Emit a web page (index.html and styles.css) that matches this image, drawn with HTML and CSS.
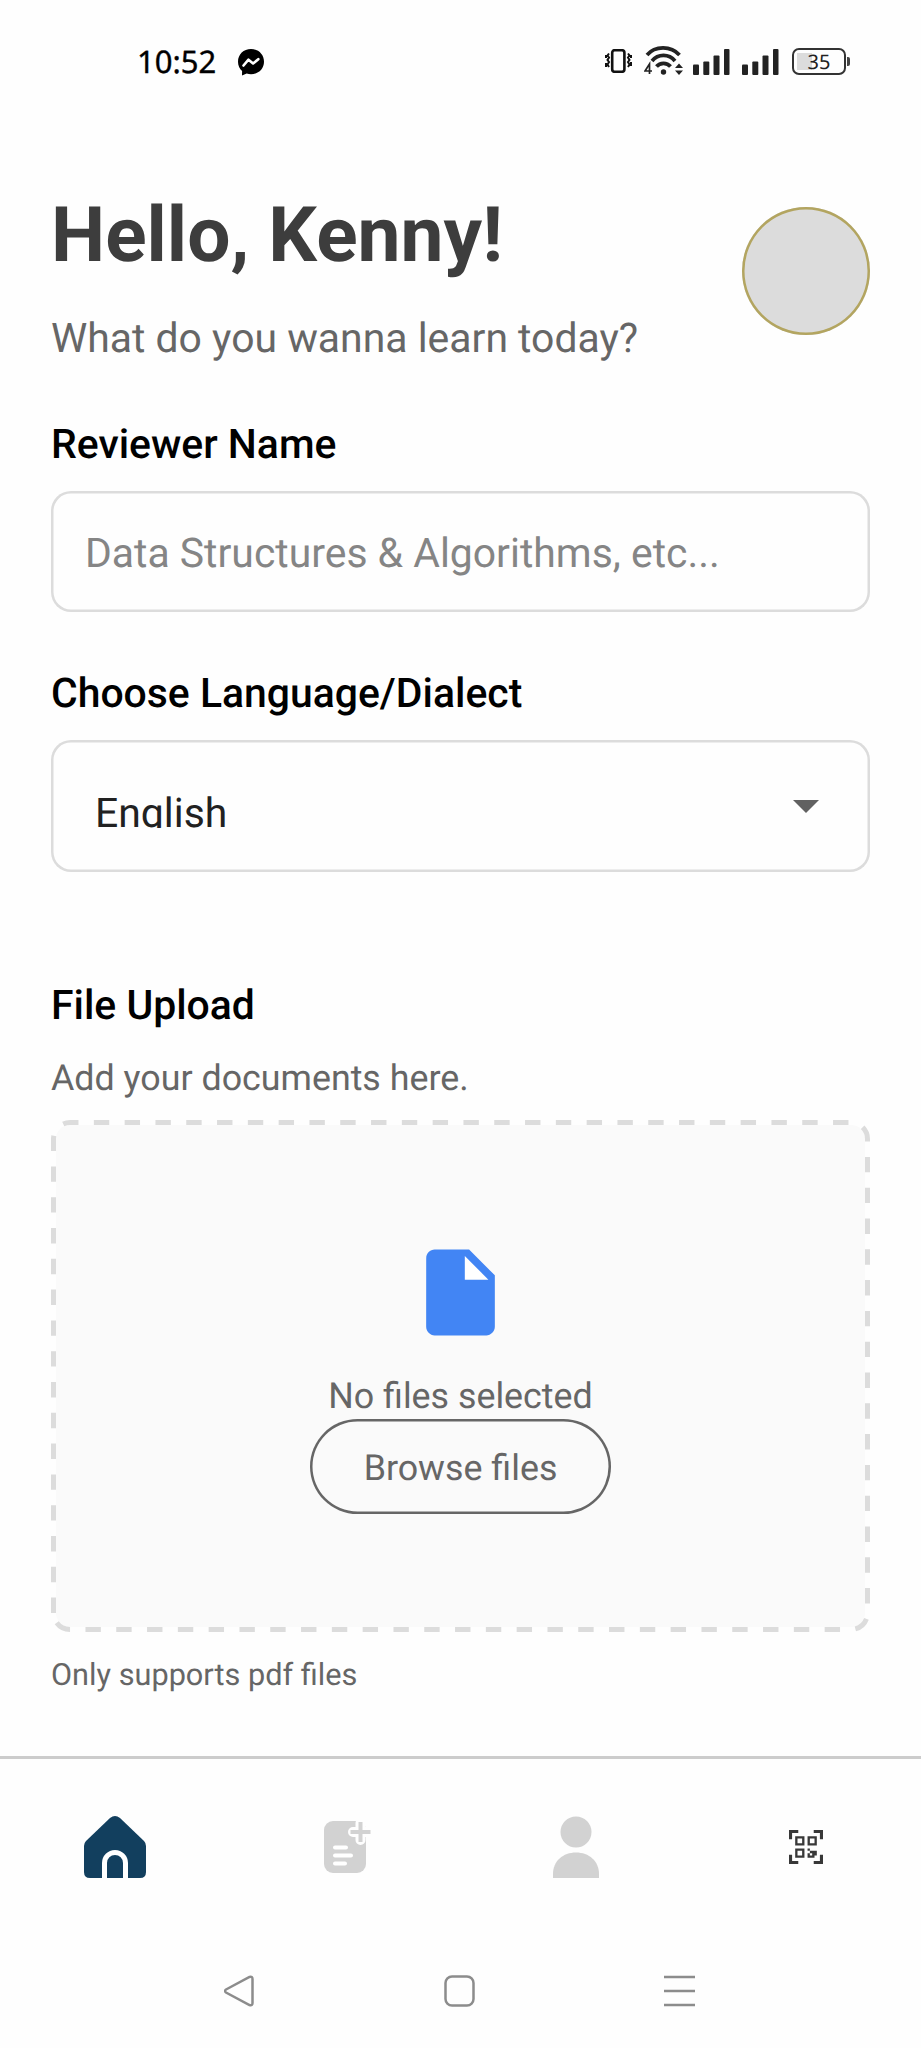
FILE: index.html
```html
<!DOCTYPE html>
<html lang="en">
<head>
<meta charset="utf-8">
<title>Home</title>
<link rel="stylesheet" href="styles.css">
</head>
<body>
<header class="status">
  <span class="time">10:52</span>
  <svg class="messenger" width="26" height="28" viewBox="0 0 26 28"><path d="M13 0C5.600 0 0 5.400 0 12.700c0 3.800 1.600 7.100 4.100 9.400L4 26.600l4.700-2.100c1.400.5 2.800.7 4.300.7 7.400 0 13-5.400 13-12.500S20.400 0 13 0z"/><path d="M5.500 16.500l5-5.800 4.600 3.800 5.200-4.300" fill="none" stroke="#fff" stroke-width="2.600" stroke-linejoin="round" stroke-linecap="round"/></svg>
  <div class="signals">
    <svg class="vibrate" width="27" height="24" viewBox="0 0 27 24" fill="none" stroke="#111" stroke-width="2"><rect x="7.200" y="1.200" width="12.200" height="21.600" rx="2.500" stroke-width="2.600"/><path d="M4 4.500l-1.500 2L4 8.500l-1.500 2.500L4 13l-1.500 2.500L4 18M1 6v3M1 14v4M23 4.500l1.500 2-1.500 2 1.500 2.500-1.500 2 1.500 2.500-1.500 2.500M26 6v3M26 13v4"/></svg>
    <svg class="wifi" width="40" height="29" viewBox="0 0 40 29"><g fill="none" stroke="#222" stroke-width="3.700"><path d="M3 9C11-.500 27-.500 35.500 9"/><path d="M8 15c6-7.500 17-7.500 23 0"/><path d="M12.500 20.500c3.500-4.300 10.500-4.300 14 0"/></g><circle cx="19.500" cy="26" r="2.700" fill="#222"/><path d="M31 22l4-4.500 4 4.500zM31 24.500l4 4.500 4-4.500z" fill="#222"/><path d="M5.500 28v-10L1 25h7" fill="none" stroke="#222" stroke-width="1.700"/></svg>
    <svg class="bars" width="37" height="26" viewBox="0 0 37 26" fill="#222"><rect y="15.500" width="6" height="10.500" rx="1"/><rect x="10.300" y="12.500" width="6" height="13.500" rx="1"/><rect x="20.500" y="6.500" width="6" height="19.500" rx="1"/><rect x="31" width="5.500" height="26" rx="1"/></svg>
    <svg class="bars second" width="37" height="26" viewBox="0 0 37 26" fill="#222"><rect y="15.500" width="6" height="10.500" rx="1"/><rect x="10.300" y="12.500" width="6" height="13.500" rx="1"/><rect x="20.500" y="6.500" width="6" height="19.500" rx="1"/><rect x="31" width="5.500" height="26" rx="1"/></svg>
    <div class="battery"><span>35</span></div>
    <i class="battery-tip"></i>
  </div>
</header>
<main>
  <section class="hero">
    <div>
      <h1>Hello, Kenny!</h1>
      <p class="question">What do you wanna learn today?</p>
    </div>
    <div class="avatar"></div>
  </section>
  <label class="label" for="name">Reviewer Name</label>
  <input class="field" id="name" placeholder="Data Structures &amp; Algorithms, etc...">
  <div class="label">Choose Language/Dialect</div>
  <div class="select">
    <span class="value">English</span>
    <svg class="caret" width="26" height="13" viewBox="0 0 26 13"><path d="M0 0h26L13 13z" fill="#616161"/></svg>
  </div>
  <h2 class="label">File Upload</h2>
  <p class="hint">Add your documents here.</p>
  <section class="drop">
    <svg class="dashes" width="819" height="512" viewBox="0 0 819 512"><rect x="5" y="5" width="809" height="502" rx="14" fill="#fafafa"/><path d="M2.500 493V19A16.500 16.500 0 0 1 19 2.500H800A16.500 16.500 0 0 1 816.500 19V493A16.500 16.500 0 0 1 800 509.500H19A16.500 16.500 0 0 1 2.500 493z" fill="none" stroke="#dcdcdc" stroke-width="5" stroke-dasharray="15.400 15.400"/></svg>
    <svg class="file" width="103" height="103" viewBox="0 0 24 24"><path fill="#4285f4" d="M6 2c-1.100 0-1.990.9-1.990 2L4 20c0 1.100.89 2 1.990 2H18c1.100 0 2-.9 2-2V8l-6-6H6z"/><path fill="#fff" d="M13 9V3.500L18.500 9H13z"/></svg>
    <p class="none">No files selected</p>
    <button class="browse">Browse files</button>
  </section>
  <p class="support">Only supports pdf files</p>
</main>
<nav class="tabs">
  <a><svg width="62" height="62" viewBox="0 0 62 62"><path d="M26 2q5-4 10 0L60 25q2 2 2 5v26q0 6-6 6H6q-6 0-6-6V30q0-3 2-5z" fill="#123f5e"/><path d="M20.500 62V47a10.500 10.500 0 0 1 21 0v15" fill="none" stroke="#fff" stroke-width="5"/></svg></a>
  <a class="notes"><svg width="48" height="54" viewBox="0 0 48 54"><rect y="1" width="42" height="52" rx="9" fill="#d2d2d2"/><path d="M36.500 3v17M29 12h17" stroke="#fefefe" stroke-width="10" stroke-linecap="round"/><path d="M36.500 2v20M26.500 12h20" stroke="#d2d2d2" stroke-width="4"/><path d="M11 27.500h11M11 35.500h16M11 43.500h10" stroke="#fff" stroke-width="4" stroke-linecap="round"/></svg></a>
  <a><svg width="48" height="62" viewBox="0 0 48 62" fill="#d2d2d2"><circle cx="24" cy="16" r="15.500"/><path d="M1 62v-4C1 45 11 36.500 24 36.500S47 45 47 58v4z"/></svg></a>
  <a><svg width="34" height="34" viewBox="0 0 22 22" fill="#383838"><path d="M0 0h6v2H2v4H0zM16 0h6v6h-2V2h-4zM0 16h2v4h4v2H0zM20 16h2v6h-6v-2h4z"/><path fill-rule="evenodd" d="M4 4h6v6H4zM5.500 5.500v3h3v-3zM12 4h6v6h-6zM13.500 5.500v3h3v-3zM4 12h6v6H4zM5.500 13.500v3h3v-3z"/><path d="M12 12h1.500v1.500H12zM13.500 13.500H18v3h-1.500V18h-3v-1.500H15V15h-1.500zM12 15h1.500v3H12v-1.500z"/></svg></a>
</nav>
<footer class="system">
  <svg width="31" height="32" viewBox="0 0 31 32"><path d="M2 14.500L25.500 2q3-1 3 2v24q0 3-3 2L2 17.500q-2-1.500 0-3z"/></svg>
  <svg width="32" height="32" viewBox="0 0 32 32"><rect x="1.500" y="1.500" width="28" height="29" rx="6.500"/></svg>
  <svg width="31" height="32" viewBox="0 0 31 32"><path d="M0 2h31M0 16h31M0 30h31"/></svg>
</footer>
</body>
</html>
```
FILE: styles.css
```css
* { box-sizing: border-box; margin: 0; padding: 0; }
body {
  width: 921px; height: 2048px; overflow: hidden;
  display: flex; flex-direction: column;
  background: #fefefe; color: #666; font-family: Roboto, sans-serif;
  text-rendering: geometricPrecision;
}
.status { height: 190px; padding: 42px 71px 0 137px; display: flex; align-items: flex-start; }
.time { width: 101px; font: 400 31px/40px "Noto Sans", sans-serif; color: #000; -webkit-text-stroke: .4px #000; }
.messenger { margin-top: 7px; }
.signals { display: flex; margin-left: auto; height: 40px; align-items: flex-start; }
.vibrate { margin-top: 7px; }
.wifi { margin: 4px 0 0 12px; }
.bars { margin: 7px 0 0 9px; }
.second { margin-left: 12px; }
.battery {
  width: 54px; height: 27px; margin: 6px 0 0 13px; border: 2px solid #333; border-radius: 7px;
  background: linear-gradient(#dcdcdc, #dcdcdc) 3px 50% / 15px 17px no-repeat;
  font: 20px/23px "Noto Sans", sans-serif; color: #222; text-align: center;
}
.battery-tip { width: 3px; height: 9px; margin: 15px 0 0 1px; border-radius: 0 2px 2px 0; background: #444; }
main { height: 1566px; padding: 0 51px; display: flex; flex-direction: column; }
.hero { display: flex; justify-content: space-between; height: 230px; }
h1 { font-size: 76.700px; line-height: 90px; font-weight: 700; color: #3d3d3d; }
.question { margin-top: 34px; font-size: 40.900px; line-height: 48px; }
.avatar { width: 128px; height: 128px; margin-top: 17px; box-shadow: inset 0 0 0 2.500px #b3a560; border-radius: 50%; background: #dcdcdc; }
.label { display: block; font-size: 40.900px; line-height: 48px; font-weight: 500; color: #000; }
.field {
  width: 819px; height: 121px; margin: 23px 0 57px; padding: 3px 34px 0; border: 0; border-radius: 20px;
  box-shadow: inset 0 0 0 2.500px #dcdcdc; background: #fefefe; font: 40.900px Roboto, sans-serif; outline: 0;
  text-rendering: inherit;
}
.field::placeholder { color: #858585; opacity: 1; }
.select {
  display: flex; justify-content: space-between; height: 132px; margin: 23px 0 109px; padding: 49px 51px 0 44px;
  box-shadow: inset 0 0 0 2.500px #dcdcdc; border-radius: 20px;
}
.value { height: 39px; overflow: hidden; font-size: 40.900px; line-height: 48px; color: #212121; }
.caret { margin-top: 11px; }
.hint { margin-top: 28px; font-size: 35.800px; line-height: 42px; }
.drop { position: relative; display: flex; flex-direction: column; align-items: center; height: 512px; margin-top: 21px; padding-top: 121px; }
.dashes { position: absolute; top: 0; left: 0; }
.file, .none, .browse { position: relative; }
.none { margin-top: 31px; font-size: 35.800px; line-height: 42px; }
.browse {
  width: 301px; height: 95px; margin-top: 2px; border: 0; border-radius: 48px; background: none;
  box-shadow: inset 0 0 0 2.500px #666;
  font: 35.800px/42px Roboto, sans-serif; color: #666; padding-top: 2px; text-rendering: inherit;
}
.support { margin-top: 26px; font-size: 30.700px; line-height: 36px; }
.tabs { display: grid; grid-template-columns: repeat(4, 1fr); height: 184px; border-top: 3px solid #ccc; padding-bottom: 5px; }
.tabs a { display: flex; align-items: center; justify-content: center; }
.tabs .notes { padding-left: 6px; }
.system { display: flex; justify-content: space-between; padding: 35px 226px 0 224px; }
.system svg { fill: none; stroke: #8c8c8c; stroke-width: 2.500; }
```
